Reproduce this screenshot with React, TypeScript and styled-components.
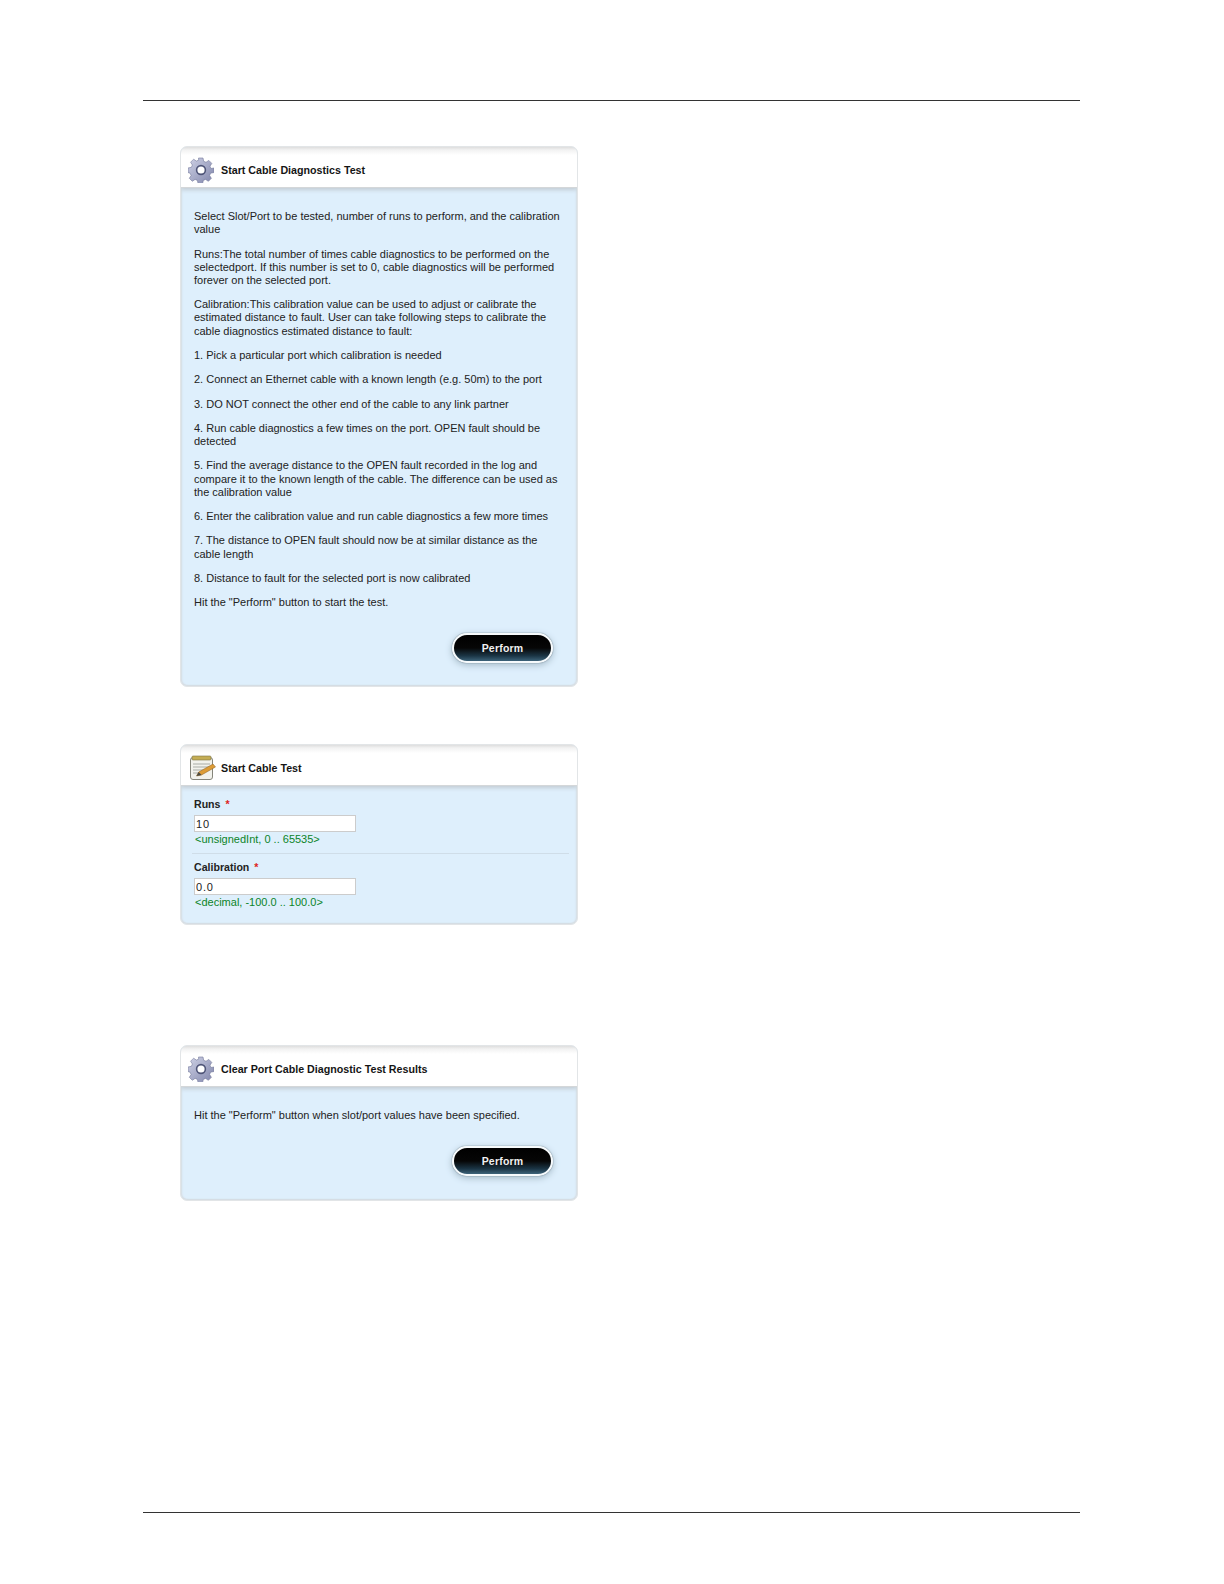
import React from 'react';
import styled, { createGlobalStyle } from 'styled-components';

const GlobalStyle = createGlobalStyle`
  html, body {
    margin: 0;
    padding: 0;
    background: #fff;
    font-family: "Liberation Sans", Arial, sans-serif;
  }
`;

const Page = styled.div`
  width: 1224px;
  height: 1584px;
  padding: 100px 144px 0 143px;
  box-sizing: border-box;
`;

const Rule = styled.div<{ $gap: number }>`
  height: 1px;
  background: #333;
  margin-top: ${p => p.$gap}px;
`;

const Panel = styled.section<{ $top: number }>`
  width: 398px;
  margin: ${p => p.$top}px 0 0 37px;
  box-sizing: border-box;
  border-radius: 7px;
  background: #deeffc;
  border: 1px solid #e2e5e7;
  box-shadow: inset 1px 0 2px #d6dde2, inset -1px 0 2px #d6dde2, inset 0 -1px 1px #d6dde2;
  overflow: hidden;
`;

const PanelHead = styled.header`
  height: 41px;
  box-sizing: border-box;
  display: flex;
  align-items: center;
  gap: 7px;
  padding: 5px 0 0 7px;
  background: linear-gradient(#dedede 0, #f2f2f2 3px, #fff 8px);
  border-bottom: 1px solid #d4d7d9;
  box-shadow: 0 2px 4px #c3ccd3;
`;

const PanelTitle = styled.h2`
  margin: 0;
  font-size: 10.7px;
  font-weight: bold;
  color: #151515;
`;

const Body = styled.div`
  padding: 22px 14px 0 13px;
  font-size: 11px;
  line-height: 13.2px;
  color: #222;
`;

const Para = styled.p`
  margin: 0 0 11.1px;
`;

const ButtonRow = styled.div<{ $top: number; $bottom: number }>`
  display: flex;
  justify-content: flex-end;
  margin: ${p => p.$top}px 24px ${p => p.$bottom}px 0;
`;

const PerformButton = styled.button`
  width: 101px;
  height: 30px;
  box-sizing: border-box;
  border-radius: 15px;
  border: 2px solid #f6fafc;
  background: linear-gradient(#000 0, #060606 50%, #1b3545 80%, #3d6379 100%);
  box-shadow: 0 0 1px #22323c, 0 2px 7px #a3b8c6;
  color: #f0f0f0;
  font: bold 10.5px "Liberation Sans", Arial, sans-serif;
  letter-spacing: 0.2px;
  padding: 0;
`;

const FormBody = styled.div`
  padding: 12px 8px 0 11px;
`;

const Field = styled.div<{ $last?: boolean }>`
  padding: 0 0 ${p => (p.$last ? 15 : 7)}px 2px;
  margin-bottom: ${p => (p.$last ? 0 : 7)}px;
  border-bottom: ${p => (p.$last ? 'none' : '1px solid #cfdde8')};
`;

const FieldLabel = styled.label`
  display: block;
  font-size: 10.6px;
  font-weight: bold;
  line-height: 13px;
  color: #222;
`;

const Required = styled.span`
  color: #d22;
  margin-left: 5px;
`;

const TextInput = styled.input`
  display: block;
  box-sizing: border-box;
  width: 162px;
  height: 17px;
  margin: 4px 0 1px;
  padding: 0 1px;
  border: 1px solid #ccc;
  background: #fff;
  font: 11px "Liberation Sans", Arial, sans-serif;
  letter-spacing: 0.8px;
  color: #222;
`;

const Hint = styled.div`
  font-size: 11px;
  line-height: 13px;
  color: #0c8428;
  padding-left: 1px;
`;

const GearIcon = () => (
  <svg width="26" height="26" viewBox="0 0 26 26">
    <defs>
      <linearGradient id="gearFill" x1="0" y1="0" x2="1" y2="1">
        <stop offset="0" stopColor="#cfd2e6" />
        <stop offset="1" stopColor="#7f84aa" />
      </linearGradient>
    </defs>
    <path
      d="M10.500 1h4.500l.7 3.300 2.300 1 2.800-1.900 3 3-1.800 2.800 1 2.300L26 11v4.500l-3.400.7-1 2.300 1.800 2.800-3 3-2.800-1.900-2.300 1-.7 3.300h-4.500l-.7-3.300-2.300-1-2.800 1.900-3-3 1.800-2.800-1-2.300L0 15.500V11l3.400-.7 1-2.300-1.800-2.800 3-3 2.800 1.900 2.300-1z"
      fill="url(#gearFill)"
      stroke="#757a9c"
      strokeWidth="0.6"
    />
    <circle cx="13" cy="13" r="4.400" fill="#fff" stroke="#4f5578" strokeWidth="1.600" />
  </svg>
);

const NotepadIcon = () => (
  <svg width="26" height="26" viewBox="0 0 26 26" overflow="visible">
    <rect x="2.500" y="2.500" width="22" height="22" rx="2.500" fill="#f2f2ec" stroke="#85857a" />
    <rect x="4" y="1" width="19" height="4" rx="1" fill="#c4ad54" stroke="#7d7344" strokeWidth="0.600" />
    <path d="M5 9h17M5 12h17M5 15h13M5 18h9" stroke="#a9aca6" strokeWidth="1" />
    <path d="M8.500 21l2.200-4L25 9l2.500 3-14 8z" fill="#dd9c36" stroke="#8b5d1c" strokeWidth="0.500" />
    <path d="M8.500 21l2.200-4 2.800 3z" fill="#4a4a44" />
  </svg>
);

const paragraphs = [
  'Select Slot/Port to be tested, number of runs to perform, and the calibration value',
  'Runs:The total number of times cable diagnostics to be performed on the selectedport. If this number is set to 0, cable diagnostics will be performed forever on the selected port.',
  'Calibration:This calibration value can be used to adjust or calibrate the estimated distance to fault. User can take following steps to calibrate the cable diagnostics estimated distance to fault:',
  '1. Pick a particular port which calibration is needed',
  '2. Connect an Ethernet cable with a known length (e.g. 50m) to the port',
  '3. DO NOT connect the other end of the cable to any link partner',
  '4. Run cable diagnostics a few times on the port. OPEN fault should be detected',
  '5. Find the average distance to the OPEN fault recorded in the log and compare it to the known length of the cable. The difference can be used as the calibration value',
  '6. Enter the calibration value and run cable diagnostics a few more times',
  '7. The distance to OPEN fault should now be at similar distance as the cable length',
  '8. Distance to fault for the selected port is now calibrated',
  'Hit the "Perform" button to start the test.',
];

const App: React.FC = () => {
  return (
    <Page>
      <GlobalStyle />
      <Rule $gap={0} />
      <Panel $top={45}>
        <PanelHead>
          <GearIcon />
          <PanelTitle>Start Cable Diagnostics Test</PanelTitle>
        </PanelHead>
        <Body>
          {paragraphs.map((text, index) => (
            <Para key={index}>{text}</Para>
          ))}
        </Body>
        <ButtonRow $top={24} $bottom={23}>
          <PerformButton>Perform</PerformButton>
        </ButtonRow>
      </Panel>

      <Panel $top={57}>
        <PanelHead>
          <NotepadIcon />
          <PanelTitle>Start Cable Test</PanelTitle>
        </PanelHead>
        <FormBody>
          <Field>
            <FieldLabel>Runs<Required>*</Required></FieldLabel>
            <TextInput defaultValue="10" />
            <Hint>&lt;unsignedInt, 0 .. 65535&gt;</Hint>
          </Field>
          <Field $last>
            <FieldLabel>Calibration<Required>*</Required></FieldLabel>
            <TextInput defaultValue="0.0" />
            <Hint>&lt;decimal, -100.0 .. 100.0&gt;</Hint>
          </Field>
        </FormBody>
      </Panel>

      <Panel $top={120}>
        <PanelHead>
          <GearIcon />
          <PanelTitle>Clear Port Cable Diagnostic Test Results</PanelTitle>
        </PanelHead>
        <Body>
          <Para>Hit the "Perform" button when slot/port values have been specified.</Para>
        </Body>
        <ButtonRow $top={23} $bottom={24}>
          <PerformButton>Perform</PerformButton>
        </ButtonRow>
      </Panel>

      <Rule $gap={311} />
    </Page>
  );
};

export default App;
